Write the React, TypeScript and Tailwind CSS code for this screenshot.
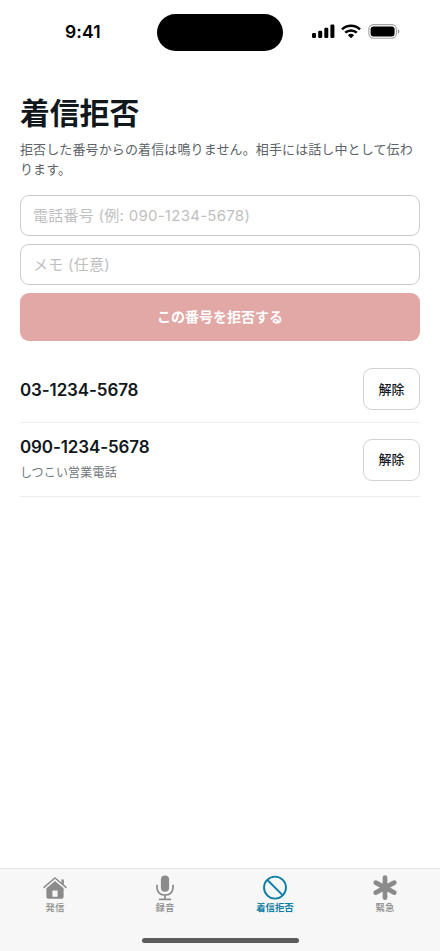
import type { ReactNode } from 'react'

const ACTIVE = '#0e7ea4'
const INACTIVE = '#8b8b8b'

function StatusBar() {
  return (
    <div className="flex h-[62px] items-start justify-between pr-10 pl-[65px] text-black">
      <span className="mt-[20px] w-[92px] text-[17.5px] leading-6 font-semibold tracking-[0.1px]">9:41</span>
      <div className="mt-[14px] h-[37px] w-[126px] rounded-full bg-black" />
      <div className="mt-[24px] ml-[29px] flex h-[15px] items-center">
        <svg width="23" height="15" viewBox="0 0 23 15" fill="currentColor">
          <rect x="0" y="9" width="4" height="5" rx="1.2" />
          <rect x="6.2" y="6.7" width="4" height="7.3" rx="1.2" />
          <rect x="12.3" y="3.7" width="4" height="10.3" rx="1.2" />
          <rect x="18.4" y="0.6" width="4" height="13.4" rx="1.2" />
        </svg>
        <svg className="ml-[6px]" width="20" height="15" viewBox="0 0 20 15" fill="none" stroke="currentColor" strokeWidth="2.5">
          <path d="M1 5.4a13 13 0 0 1 18 0" />
          <path d="M4.2 8.7a8.4 8.4 0 0 1 11.6 0" />
          <path d="M6.9 11.2a4.5 4.5 0 0 1 6.2 0L10 14.3z" fill="currentColor" stroke="none" />
        </svg>
        <svg className="ml-[7px]" width="32" height="15" viewBox="0 0 32 15">
          <rect x="0.8" y="0.6" width="27.6" height="13.6" rx="4.6" fill="none" stroke="#a3a3a3" strokeWidth="1.1" />
          <rect x="2.6" y="2.4" width="24" height="10" rx="2.9" fill="#000" />
          <path d="M29.9 5v4.8q1.4-.8 1.4-2.4T29.9 5" fill="#8f8f8f" />
        </svg>
      </div>
    </div>
  )
}

function Field({ placeholder }: { placeholder: string }) {
  return (
    <input
      className="h-[41px] w-full rounded-[9px] border border-[#c9cdcf] bg-white px-3 text-[15px] tracking-[0.27px] text-[#11181c] placeholder:text-[#bfbfc1]"
      placeholder={placeholder}
    />
  )
}

function BlockedRow({ number, memo }: { number: string; memo?: string }) {
  return (
    <li className="flex items-center justify-between border-b border-[#ececec] py-3">
      <div className="mt-px -mb-px">
        <p className="text-[17px] leading-[22px] font-semibold tracking-[-0.12px] text-[#11181c]">{number}</p>
        {memo && <p className="mt-[4px] pb-[2px] text-[12px] leading-[21px] tracking-[0.2px] text-[#72777b]">{memo}</p>}
      </div>
      <button className="h-[42px] w-[57px] rounded-[9px] border border-[#d0d3d5] pt-px text-[13px] font-medium text-[#11181c]">
        解除
      </button>
    </li>
  )
}

function Tab({ label, active, children }: { label: string; active?: boolean; children: ReactNode }) {
  return (
    <a className="flex flex-1 flex-col items-center pt-[6px]" style={{ color: active ? ACTIVE : INACTIVE }}>
      <svg width="26" height="26" viewBox="0 0 26 26" fill="none" stroke="currentColor">
        {children}
      </svg>
      <span className={active ? 'text-[9.4px] leading-[14px] font-bold' : 'text-[9.4px] leading-[14px] font-medium'}>{label}</span>
    </a>
  )
}

function TabBar() {
  return (
    <nav className="flex h-[83px] flex-col border-t border-[#e4e4e4] bg-[#f7f7f7]">
      <div className="flex flex-1">
        <Tab label="発信">
          <path d="M2 12.4 12.3 3.5a1 1 0 0 1 1.4 0L24 12.4" strokeWidth="1.5" strokeLinecap="round" />
          <path d="M19.4 4.4h2.5v5.4l-2.5-2.1z" fill="currentColor" stroke="none" />
          <path d="M4.4 13.2 13 5.9l8.6 7.3v8.8a1.8 1.8 0 0 1-1.8 1.8H6.2A1.8 1.8 0 0 1 4.4 22zM10.4 15.4v6.3h5.2v-6.3z" fill="currentColor" fillRule="evenodd" stroke="none" />
        </Tab>
        <Tab label="録音">
          <rect x="8.9" y="0.4" width="8.2" height="16.4" rx="4.1" fill="currentColor" stroke="none" />
          <path d="M5 10.3v2.3c0 4.6 3.3 7.4 8 7.4s8-2.8 8-7.4v-2.3M13 20v4.2M7.6 24.3h10.8" strokeWidth="1.7" strokeLinecap="round" />
        </Tab>
        <Tab label="着信拒否" active>
          <circle cx="13" cy="12.6" r="11" strokeWidth="1.9" />
          <path d="m5.4 5 15.2 15.2" strokeWidth="1.9" />
        </Tab>
        <Tab label="緊急">
          <path d="M13 2.5v20.2M3.7 7.6l18.6 10M22.3 7.6l-18.6 10" strokeWidth="4.7" strokeLinecap="round" />
        </Tab>
      </div>
      <div className="mb-[8px] h-[5px] w-[157px] self-center rounded-full bg-[#5b5b5b]" />
    </nav>
  )
}

export default function App() {
  return (
    <div className="flex h-[951px] w-[440px] flex-col bg-white font-[Inter,'Noto_Sans_CJK_JP',sans-serif]">
      <StatusBar />
      <main className="flex-1 px-5 pt-[32px]">
        <h1 className="text-[29.8px] leading-[38px] font-semibold text-[#11181c]">着信拒否</h1>
        <p className="mt-[7px] text-[13px] leading-5 tracking-[0.12px] text-[#5d6368]">
          拒否した番号からの着信は鳴りません。相手には話し中として伝わります。
        </p>
        <form className="mt-4 flex flex-col gap-2">
          <Field placeholder="電話番号 (例: 090-1234-5678)" />
          <Field placeholder="メモ (任意)" />
          <button type="button" className="h-12 rounded-[9px] bg-[#e2a8a6] pb-px text-[14px] font-semibold text-white">
            この番号を拒否する
          </button>
        </form>
        <ul className="mt-[15px]">
          <BlockedRow number="03-1234-5678" />
          <BlockedRow number="090-1234-5678" memo="しつこい営業電話" />
        </ul>
      </main>
      <TabBar />
    </div>
  )
}
